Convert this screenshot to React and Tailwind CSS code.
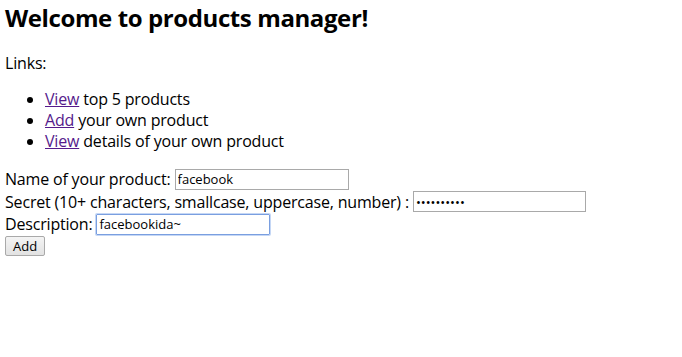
export default function App() {
  return (
    <div className="px-[5px] pt-[2px] text-[16px] text-black bg-white min-h-[357px]">
      <div className="font-['Open_Sans',sans-serif] tracking-[-0.18px]">
        <h1 className="text-[24px] font-bold leading-[32px] tracking-[-0.4px]">Welcome to products manager!</h1>
        <p className="mt-[18px] leading-[22px]">Links:</p>
        <ul className="mt-[15px] list-disc pl-[40px] leading-[21px]">
          <li>
            <a href="#" className="text-[#551a8b] underline">View</a> top 5 products
          </li>
          <li>
            <a href="#" className="text-[#551a8b] underline">Add</a> your own product
          </li>
          <li>
            <a href="#" className="text-[#551a8b] underline">View</a> details of your own product
          </li>
        </ul>
        <form className="mt-[16px] leading-[22px]">
          <div className="flex items-center h-[22px]">
            <span>Name of your product:&nbsp;</span>
            <input
              type="text"
              defaultValue="facebook"
              className="w-[174px] h-[21px] border border-[#a9a9a9] px-[2px] text-[13px] tracking-normal outline-none"
            />
          </div>
          <div className="flex items-center h-[23px]">
            <span>Secret (10+ characters, smallcase, uppercase, number) :&nbsp;</span>
            <input
              type="password"
              defaultValue="facebook12"
              className="w-[173px] h-[21px] border border-[#a9a9a9] px-[2px] text-[13px] tracking-normal outline-none"
            />
          </div>
          <div className="flex items-center h-[22px]">
            <span>Description:&nbsp;</span>
            <input
              type="text"
              defaultValue="facebookida~"
              className="w-[174px] h-[21px] border border-[#7a9fe0] rounded-[1px] px-[2px] text-[13px] tracking-normal outline-none shadow-[0_0_0_1px_#c5d7f5]"
            />
          </div>
          <div className="flex items-center h-[22px]">
            <button
              type="button"
              className="h-[20px] px-[7px] text-[13px] leading-[16px] tracking-normal border border-[#a9a9a9] rounded-[2px] bg-gradient-to-b from-[#f4f4f4] to-[#e2e2e2]"
            >
              Add
            </button>
          </div>
        </form>
      </div>
    </div>
  );
}
